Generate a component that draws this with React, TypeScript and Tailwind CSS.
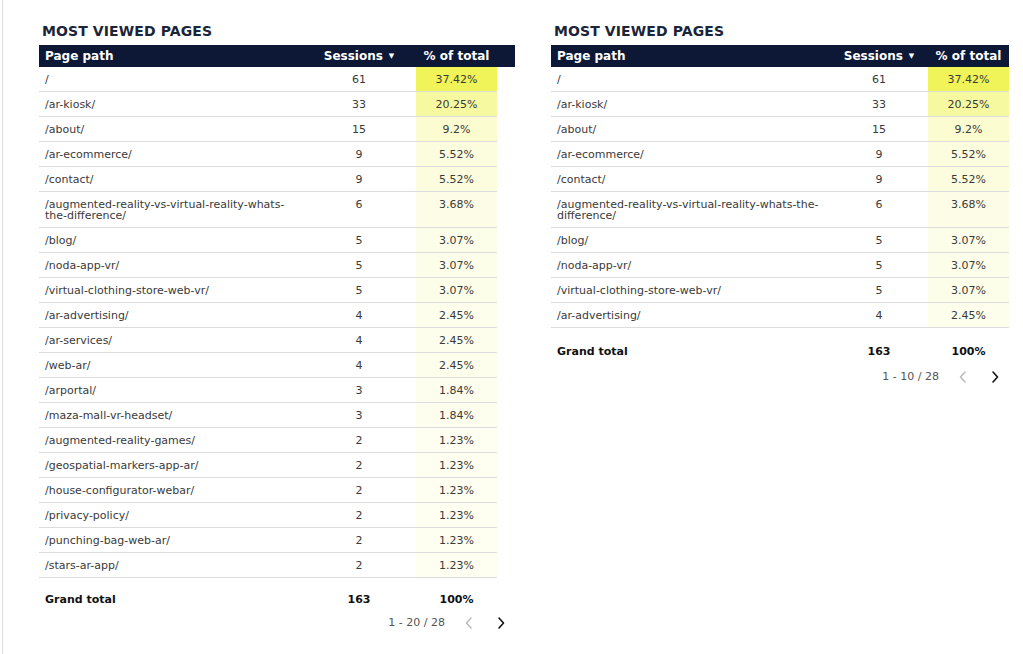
import React from "react";

type Row = { path: string; s: number; p: string };

const leftRows: Row[] = [
  { path: "/", s: 61, p: "37.42%" },
  { path: "/ar-kiosk/", s: 33, p: "20.25%" },
  { path: "/about/", s: 15, p: "9.2%" },
  { path: "/ar-ecommerce/", s: 9, p: "5.52%" },
  { path: "/contact/", s: 9, p: "5.52%" },
  { path: "/augmented-reality-vs-virtual-reality-whats-the-difference/", s: 6, p: "3.68%" },
  { path: "/blog/", s: 5, p: "3.07%" },
  { path: "/noda-app-vr/", s: 5, p: "3.07%" },
  { path: "/virtual-clothing-store-web-vr/", s: 5, p: "3.07%" },
  { path: "/ar-advertising/", s: 4, p: "2.45%" },
  { path: "/ar-services/", s: 4, p: "2.45%" },
  { path: "/web-ar/", s: 4, p: "2.45%" },
  { path: "/arportal/", s: 3, p: "1.84%" },
  { path: "/maza-mall-vr-headset/", s: 3, p: "1.84%" },
  { path: "/augmented-reality-games/", s: 2, p: "1.23%" },
  { path: "/geospatial-markers-app-ar/", s: 2, p: "1.23%" },
  { path: "/house-configurator-webar/", s: 2, p: "1.23%" },
  { path: "/privacy-policy/", s: 2, p: "1.23%" },
  { path: "/punching-bag-web-ar/", s: 2, p: "1.23%" },
  { path: "/stars-ar-app/", s: 2, p: "1.23%" },
];

function heat(p: string) {
  const v = parseFloat(p) / 37.42;
  const t = 0.05 + 0.95 * v;
  const r = Math.round(255 + (240 - 255) * t);
  const g = Math.round(255 + (244 - 255) * t);
  const b = Math.round(255 + (88 - 255) * t);
  return `rgb(${r},${g},${b})`;
}

function Chevron({ dir, color }: { dir: "l" | "r"; color: string }) {
  return (
    <svg width="10" height="14" viewBox="0 0 10 14" fill="none">
      <path
        d={dir === "l" ? "M7 2 L2.5 7 L7 12" : "M3 2 L7.5 7 L3 12"}
        stroke={color}
        strokeWidth="1.6"
        strokeLinecap="round"
        strokeLinejoin="round"
      />
    </svg>
  );
}

function Table({
  rows,
  width,
  gutter,
  sessW,
  pathW,
  range,
  totalH,
}: {
  rows: Row[];
  width: string;
  gutter: boolean;
  sessW: string;
  pathW: string;
  range: string;
  totalH: string;
}) {
  return (
    <div className={`flex flex-col ${width}`}>
      <div className="pl-[3px] text-[14px] leading-[18px] font-bold text-[#1c2437] tracking-[0.1px]">
        MOST VIEWED PAGES
      </div>
      <div className={`mt-[5px] flex h-[22px] items-center bg-[#0d1836] text-white text-[12px] font-bold ${gutter ? "pr-[18px]" : ""}`}>
        <div className="flex-1 pl-[6px]">Page path</div>
        <div className={`${sessW} flex items-center justify-center gap-[6px]`}>
          <span>Sessions</span>
          <span className="text-[7px]">▼</span>
        </div>
        <div className="w-[81px] text-center">% of total</div>
      </div>
      <div className={gutter ? "pr-[18px]" : ""}>
        {rows.map((r) => (
          <div key={r.path} className="flex border-b border-[#dcdcdc] text-[11px] text-[#3a3a3a]">
            <div className={`flex-1 pl-[6px] pt-[7px] pb-[6px] leading-[11px] ${pathW}`}>{r.path}</div>
            <div className={`${sessW} pt-[7px] pb-[6px] leading-[11px] text-center`}>{r.s}</div>
            <div className="w-[81px] pt-[7px] pb-[6px] leading-[11px] text-center" style={{ backgroundColor: heat(r.p) }}>
              {r.p}
            </div>
          </div>
        ))}
        <div className={`flex ${totalH} items-center text-[11px] font-bold text-[#111]`}>
          <div className="flex-1 pl-[6px]">Grand total</div>
          <div className={`${sessW} text-center`}>163</div>
          <div className="w-[81px] text-center">100%</div>
        </div>
      </div>
      <div className="flex items-center justify-end pr-[9px] text-[11px] text-[#555] -mt-[7px]">
        <span>{range}</span>
        <span className="ml-[19px]"><Chevron dir="l" color="#bdbdbd" /></span>
        <span className="ml-[22px]"><Chevron dir="r" color="#111" /></span>
      </div>
    </div>
  );
}

export default function App() {
  return (
    <div
      className="w-[1023px] h-[654px] bg-white overflow-hidden"
      style={{ fontFamily: '"DejaVu Sans", "Noto Sans", sans-serif' }}
    >
      <div className="ml-[2px] h-full border-l border-[#e0e0e0] pl-[36px] pt-[22px] flex gap-[36px] items-start">
        <Table rows={leftRows} width="w-[476px]" gutter sessW="w-[114px]" pathW="w-[263px]" range="1 - 20 / 28" totalH="h-[44px]" />
        <Table rows={leftRows.slice(0, 10)} width="w-[458px]" gutter={false} sessW="w-[98px]" pathW="w-[279px]" range="1 - 10 / 28" totalH="h-[48px]" />
      </div>
    </div>
  );
}
